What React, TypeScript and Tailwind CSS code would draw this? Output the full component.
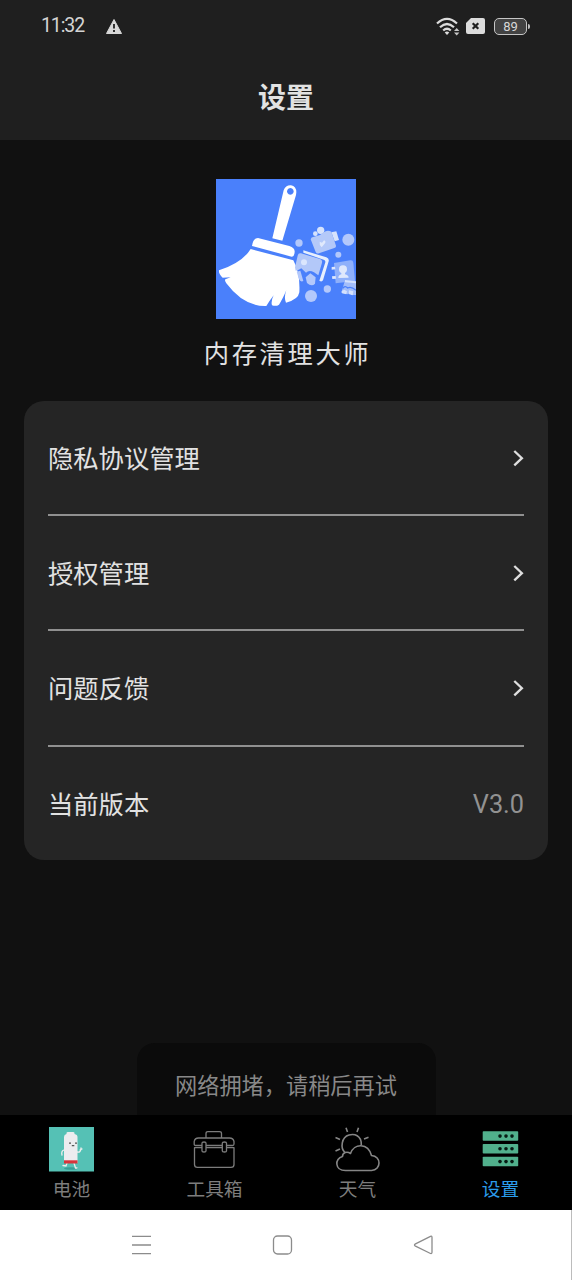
import React from "react";

const Broom = () => (
  <svg viewBox="30 28 420 420" className="h-[140px] w-[140px] shrink-0">
    <rect x="30" y="28" width="420" height="421" fill="#4a80fb" />
    <path fillRule="evenodd" fill="#fff" d="M199 206 L233 62 Q239 46 255 47 Q271 50 271 68 L270 76 L229 213 Z M253 55 a10 10 0 1 0 .1 0 Z" />
    <path fill="#fff" d="M138 229 Q141 205 156 205 L250 229 Q267 235 266 247 Q265 262 257 261 Z" />
    <path fill="#fff" d="M134 238 L262 272 Q283 310 280 368 Q277 390 240 399 Q233 384 241 362 Q229 390 219 405 Q210 411 198 407 Q194 395 203 377 Q190 394 181 409 Q113 411 61 341 Q55 333 58 329 L74 323 L50 324 Q37 312 39 302 Q109 279 134 238 Z" />
    <g fill="#b3c8fb">
      <circle cx="279" cy="220" r="11" />
      <circle cx="427" cy="210" r="18" />
      <circle cx="397" cy="255" r="9" />
      <circle cx="364" cy="358" r="11" />
      <circle cx="315" cy="379" r="18" />
      <circle cx="344" cy="182" r="11" fill="#d7e3fc" />
      <circle cx="328" cy="192" r="7" fill="#d7e3fc" />
      <path d="M376 188 L391 185 L399 211 L386 215 Z" fill="#d7e3fc" />
      <path d="M314 209 Q315 202 324 201 L342 196 L353 188 Q364 179 376 186 L390 228 Q391 233 385 235 L339 251 Q332 253 329 247 Z" fill="#b4c9f9" />
      <path d="M341 216 L348 219 L354 212 Q361 215 357 221 L347 233 Q339 225 341 216 Z" fill="#e0e9fc" />
      <path d="M285 251 Q277 249 275 258 L267 293 L269 303 Q279 302 286 296 L300 309 Q309 299 324 308 L337 317 L348 279 Q350 270 342 268 Z" fill="#b3c8f9" />
      <path d="M272 306 L283 303 L292 334 Q283 338 279 328 Z" />
      <path d="M299 323 L313 311 L329 323 L327 342 Q317 352 303 340 Z" />
      <circle cx="294" cy="278" r="9" fill="#dbe6fd" />
      <path d="M292 242 L361 263 Q370 266 368 275 L351 332 Q347 338 340 333 L358 278 Q359 272 353 270 L292 249 Z" fill="#e7effd" />
      <path d="M384 280 L433 272 Q441 271 442 279 L447 334 L389 341 Z" fill="#8fb0fa" />
      <circle cx="411" cy="299" r="12" fill="#dfe8fc" />
      <path d="M397 325 Q397 316 406 314 L406 306 H417 V314 Q427 316 428 324 Z" fill="#dfe8fc" />
      <path d="M377 292 L387 291 L388 299 L377 300 Z M378 320 L389 319 L390 327 L379 328 Z" fill="#dfe8fc" />
      <path d="M416 335 L450 339 V376 H436 L431 368 L426 374 L406 369 Z" fill="#a2bdfa" />
      <path d="M417 331 L450 335 V341 L417 338 Z M407 364 L415 360 L423 365 L421 374 L408 371 Z M429 362 L442 365 L440 377 L428 373 Z" fill="#d4e1fd" />
      <path d="M410 356 Q417 346 425 355 Q436 349 450 362" fill="none" stroke="#4a80fb" strokeWidth="4" />
    </g>
  </svg>
);

const BatteryBuddy = () => (
  <svg viewBox="0 0 45 45" className="h-[45px] w-[45px]">
    <path fill="#55c1b5" d="M0 0H45V44.500H0Z" />
    <ellipse cx="22" cy="41.500" rx="7" ry="1.300" fill="#399f96" />
    <g fill="none" stroke="#eee" strokeWidth="1.300" strokeLinecap="round">
      <path d="M15 23Q12 24 13 28M28 25Q32 26 32 21M31 23L33 22M18 36L17 39L14 38.500M25 36L26.500 41H28" />
    </g>
    <path fill="#ececef" d="M17.500 7V6Q17.500 5 19 5H24Q25.500 5 25.500 6V7Q28.500 7.500 28.500 10V36H15V10Q15 7.500 17.500 7Z" />
    <path fill="#d7343b" d="M15 33.300H28.500V36.500H15Z" />
    <path fill="#555" d="M20 15.500h2v1.200h-2zM26 15.500h2v1.200h-2zM22.800 18h2.500v1.200h-2.500z" />
  </svg>
);

const Toolbox = () => (
  <svg viewBox="0 0 45 45" className="h-[45px] w-[45px]" fill="none" stroke="#7c7c7c" strokeWidth="1.300" strokeLinejoin="round">
    <path d="M14 11V6.500Q14 4.700 16 4.700H27.500Q29.500 4.700 29.500 6.500V11" />
    <path d="M10 18.500H3.500Q2.200 18.500 2.200 17V14.500Q2.800 11 6.500 11H37.500Q41.300 11 42 14.500V17Q42 18.500 40.500 18.500H34.500M30 18.500H14" />
    <path d="M10 16Q10 15 12 15Q14 15 14 16V24Q14 25 12 25Q10 25 10 24ZM30.300 16Q30.300 15 32.500 15Q34.500 15 34.500 16V24Q34.500 25 32.500 25Q30.300 25 30.300 24Z" />
    <path d="M10 20.700H2.500V37.500Q2.500 40.400 5.500 40.400H39Q42 40.400 42 37.500V20.700H34.500M30 20.700H14" />
  </svg>
);

const Weather = () => (
  <svg viewBox="0 0 45 45" className="h-[45px] w-[45px]" fill="none" stroke="#858585" strokeWidth="1.600" strokeLinejoin="round">
    <path d="M10 25.500C5 21 6.500 10 14 8Q22 6 25.500 12.500Q26.500 15 26.300 18" />
    <path d="M10.500 43.500C-.5 43.500-.5 31.500 7.500 29.500C7.500 25.500 12 24 15.500 26.500C19 16 33 15.500 36.500 28.500C46.500 29 46.500 43 36.500 43.500Z" />
    <path d="M12.500 5L11 .7M22 5L23.500 .7M29 12L33.500 10.300M5 12.500L.5 10.500M5 22L.5 24" />
  </svg>
);

const SettingsStack = () => (
  <svg viewBox="0 0 45 45" className="h-[45px] w-[45px]">
    {[4.300, 17, 29.800].map((y) => (
      <g key={y}>
        <rect x="4.700" y={y} width="35.500" height="9.500" rx=".8" fill="#51b08c" />
        {[22, 28, 34].map((x) => (
          <circle key={x} cx={x} cy={y + 4.800} r="1.800" fill="#071b14" />
        ))}
      </g>
    ))}
  </svg>
);

const tabs = [
  { label: "电池", icon: <BatteryBuddy /> },
  { label: "工具箱", icon: <Toolbox /> },
  { label: "天气", icon: <Weather /> },
  { label: "设置", icon: <SettingsStack />, active: true },
];

const rows = [
  { label: "隐私协议管理" },
  { label: "授权管理" },
  { label: "问题反馈" },
  { label: "当前版本", value: "V3.0" },
];

const StatusBar = () => (
  <div className="flex h-[52px] items-center pl-[41px] pr-[42px]">
    <span className="w-[64px] font-['Roboto','Noto_Sans_CJK_SC',sans-serif] text-[19.500px] tracking-[-1.100px] text-[#d4d4d4]">11:32</span>
    <svg viewBox="0 0 18 17" className="h-[17px] w-[18px]">
      <path d="M9 1.500L16.500 15.500H1.500Z" fill="#d7d7d7" stroke="#d7d7d7" strokeLinejoin="round" />
      <path d="M9 6V10.500M9 12V14" stroke="#1f1f1f" strokeWidth="1.800" />
    </svg>
    <div className="ml-auto flex items-center">
      <svg viewBox="0 0 24 19" className="h-[19px] w-[24px]" fill="none" stroke="#dcdcdc" strokeWidth="2.200">
        <path d="M1 6.500Q11 -2.800 21 6.500M4 10.200Q11 3.800 18 10.200M7.200 13.500Q11 10 14.800 13.500" />
        <path d="M8.700 15.500Q11 13.700 13.300 15.500L11 18Z" fill="#dcdcdc" stroke="none" />
        <path d="M18 14L20.700 11L23.400 14ZM18 15.500H23.400L20.700 18.500Z" fill="#c5c5c5" stroke="none" />
      </svg>
      <svg viewBox="0 0 19 16" className="ml-[6px] h-[16px] w-[19px]">
        <path d="M5 0H17Q19 0 19 2V14Q19 16 17 16H2Q0 16 0 14V5Z" fill="#dcdcdc" />
        <path d="M6.700 5.200L12.300 10.800M12.300 5.200L6.700 10.800" stroke="#1f1f1f" strokeWidth="2.200" />
      </svg>
      <div className="ml-[9px] flex h-[17px] w-[33px] items-center justify-center rounded-[5px] border-[1.500px] border-[#c5c5c5] bg-[#424242] font-['Roboto',sans-serif] text-[13px] leading-none text-[#d8d8d8]">89</div>
      <div className="ml-px h-[5px] w-[2px] rounded-r bg-[#bdbdbd]" />
    </div>
  </div>
);

export default function App() {
  return (
    <div className="flex h-[1280px] w-[572px] flex-col overflow-hidden bg-[#111111] font-['Noto_Sans_CJK_SC',sans-serif] text-[#e2e2e2]">
      <header className="h-[140px] shrink-0 bg-[#1f1f1f]">
        <StatusBar />
        <h1 className="flex h-[88px] items-center justify-center text-[28px] font-bold leading-none">设置</h1>
      </header>
      <main className="flex h-[975px] shrink-0 flex-col items-center pt-[39.400px]">
        <Broom />
        <p className="mt-[16.600px] flex h-[33px] items-center pl-[3px] text-[25.300px] leading-none tracking-[2.600px]">内存清理大师</p>
        <section className="mt-[32px] h-[459px] w-[524px] shrink-0 rounded-[20px] bg-[#252525] px-6">
          {rows.map((row, i) => (
            <div key={row.label} className={`flex h-[115.200px] items-center justify-between text-[25.300px] leading-none ${i < 3 ? "border-b-2 border-[#909090]" : ""}`}>
              <span>{row.label}</span>
              {row.value ? (
                <span className="relative top-[1px] font-['Roboto',sans-serif] text-[25.300px] text-[#929292]">{row.value}</span>
              ) : (
                <svg viewBox="0 0 12 18" className="h-[18px] w-[12px]" fill="none" stroke="#dedede" strokeWidth="2.300">
                  <path d="M2.300 2L9.900 9.200L2.300 16.400" />
                </svg>
              )}
            </div>
          ))}
        </section>
        <div className="mt-auto flex h-[72px] w-[299px] items-start justify-center rounded-t-[18px] bg-[#0b0b0b] pt-[30px] text-[22.200px] leading-none text-[#888888]">网络拥堵，请稍后再试</div>
      </main>
      <nav className="grid h-[95px] shrink-0 grid-cols-4 bg-black">
        {tabs.map((tab) => (
          <div key={tab.label} className={`flex flex-col items-center pt-[12px] text-[18.700px] leading-none ${tab.active ? "text-[#2b9cec]" : "text-[#7d7d7d]"}`}>
            {tab.icon}
            <span className="mt-[7px]">{tab.label}</span>
          </div>
        ))}
      </nav>
      <footer className="flex h-[70px] shrink-0 items-center border-r border-[#bcbcbc] bg-white pl-[131px]">
        <svg viewBox="0 0 21 22" className="h-[22px] w-[21px]" stroke="#8c8c8c" strokeWidth="1.300">
          <path d="M1 2.300H20M1 11H20M1 19.700H20" />
        </svg>
        <svg viewBox="0 0 22 22" className="ml-[120px] h-[22px] w-[22px]" fill="none" stroke="#8c8c8c" strokeWidth="1.300">
          <rect x="1.500" y="2" width="18" height="18" rx="4" />
        </svg>
        <svg viewBox="0 0 21 22" className="ml-[119px] h-[22px] w-[21px]" fill="none" stroke="#8c8c8c" strokeWidth="1.300" strokeLinejoin="round">
          <path d="M17.500 2.300Q19 1.800 19 3.500V18Q19 20 17.500 19.500L2 11.800Q1 11 2 10.200Z" />
        </svg>
      </footer>
    </div>
  );
}
